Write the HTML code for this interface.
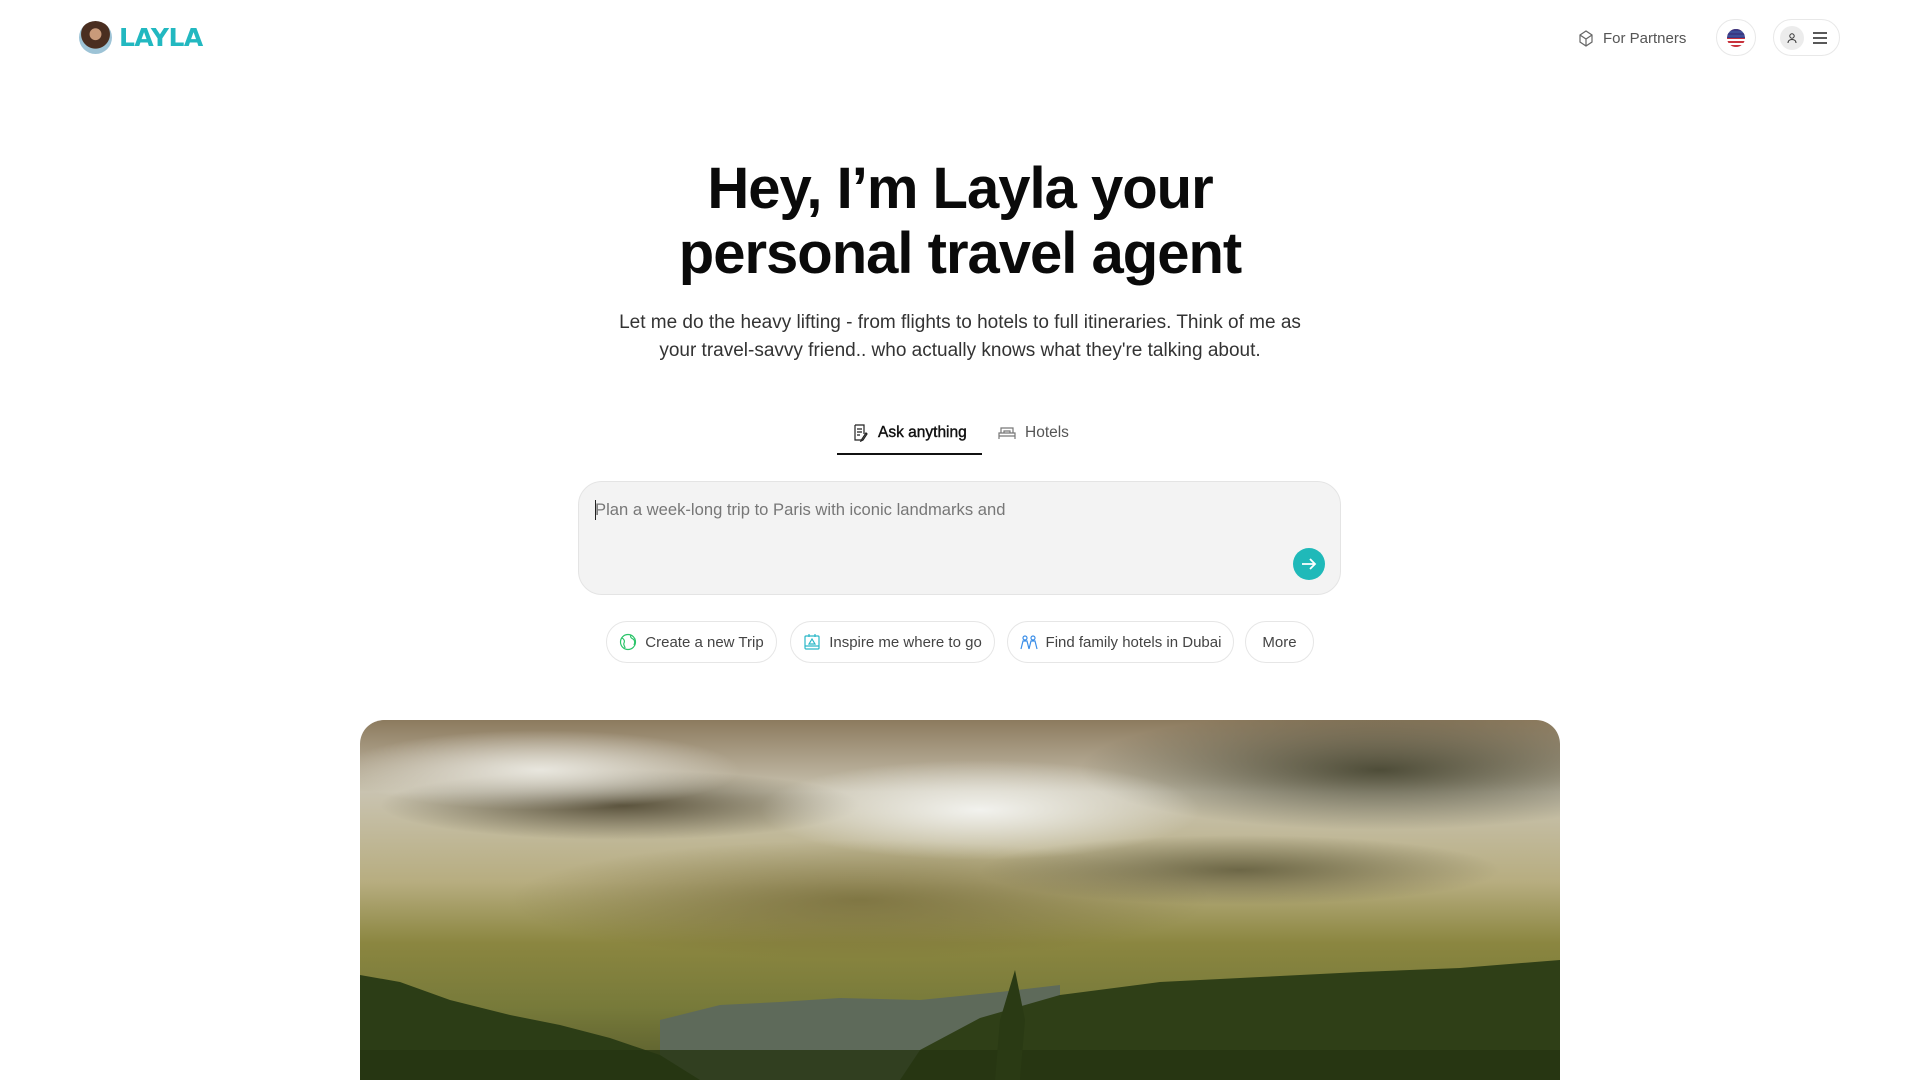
<!DOCTYPE html>
<html><head><meta charset="utf-8"><style>
*{box-sizing:border-box;margin:0;padding:0}
html,body{width:1920px;height:1080px;overflow:hidden}
body{background:#fff;font-family:"Liberation Sans",sans-serif;color:#111;position:relative}
.abs{position:absolute}
h1{position:absolute;left:0;width:1920px;top:156px;text-align:center;font-size:58px;line-height:65px;font-weight:700;letter-spacing:-1px;color:#0a0a0a}
.sub{position:absolute;left:0;width:1920px;top:309px;text-align:center;font-size:19px;line-height:28px;color:#333}
.tab{position:absolute;top:424px;font-size:15.5px;display:flex;align-items:center;gap:9px}
.box{position:absolute;left:578px;top:481px;width:763px;height:114px;background:#f3f3f3;border:1px solid #e4e4e4;border-radius:24px}
.chip{position:absolute;top:621px;height:42px;border:1px solid #e6e6e6;border-radius:21px;display:flex;align-items:center;justify-content:center;gap:8px;font-size:15px;color:#444}
</style></head><body>
<!-- header -->
<div class="abs" style="left:79px;top:21px;width:33px;height:33px;border-radius:50%;background:radial-gradient(circle at 50% 40%,#c99a7a 0 22%,#4a2e20 24% 55%,#9dc3d6 57%);"></div>
<div class="abs" style="left:119px;top:24px;font-size:25px;font-weight:900;color:#22b8c0;font-family:'DejaVu Sans',sans-serif;line-height:28px;letter-spacing:-0.5px">LAYLA</div>
<svg class="abs" style="left:1577px;top:29px" width="18" height="18" viewBox="0 0 18 18" fill="none" stroke="#666" stroke-width="1.2"><path d="M3 6 9 2l6 4v7l-6 4-6-4z M3 6l6 4 6-4 M9 10v7"/></svg>
<div class="abs" style="left:1603px;top:30px;font-size:15px;color:#555">For Partners</div>
<div class="abs" style="left:1716px;top:19px;width:40px;height:37px;border:1px solid #e8e8e8;border-radius:20px"></div>
<div class="abs" style="left:1727px;top:29px;width:18px;height:18px;border-radius:50%;background:repeating-linear-gradient(#c8323c 0 2px,#fff 2px 4px);overflow:hidden"><div style="width:18px;height:9px;background:#2a3a8c;opacity:.9"></div></div>
<div class="abs" style="left:1773px;top:19px;width:67px;height:37px;border:1px solid #e8e8e8;border-radius:20px"></div>
<div class="abs" style="left:1780px;top:26px;width:24px;height:24px;border-radius:50%;background:#ececec"></div>
<svg class="abs" style="left:1786px;top:32px" width="12" height="12" viewBox="0 0 12 12" fill="none" stroke="#333" stroke-width="1"><circle cx="6" cy="4" r="2.2"/><path d="M2 11c0-2.5 2-3.5 4-3.5s4 1 4 3.5"/></svg>
<svg class="abs" style="left:1812px;top:31px" width="16" height="14" viewBox="0 0 16 14" stroke="#222" stroke-width="1.4"><path d="M1 2h14M1 7h14M1 12h14"/></svg>

<h1>Hey, I’m Layla your<br>personal travel agent</h1>
<div class="sub">Let me do the heavy lifting - from flights to hotels to full itineraries. Think of me as<br>your travel-savvy friend.. who actually knows what they're talking about.</div>

<div class="tab" style="left:852px;color:#111"><svg width="17" height="18" viewBox="0 0 17 18" fill="none" stroke="#222" stroke-width="1.2"><path d="M3 1h9v9M3 1v15h7M5 5h5M5 8h5M5 11h3M14 9l-4 6-1 2 2-1 4-6z"/></svg><span style="-webkit-text-stroke:0.4px #111">Ask anything</span></div>
<div class="abs" style="left:837px;top:453px;width:145px;height:2px;background:#111"></div>
<div class="tab" style="left:998px;color:#555"><svg width="18" height="16" viewBox="0 0 18 16" fill="none" stroke="#777" stroke-width="1.2"><path d="M1 14V8h16v6M1 11h16M3 8V3h12v5M6 8V6h6v2"/></svg>Hotels</div>

<div class="box">
<div class="abs" style="left:16px;top:18px;width:1px;height:20px;background:#222"></div>
<div class="abs" style="left:16px;top:18px;font-size:16.6px;color:#777">Plan a week-long trip to Paris with iconic landmarks and</div>
<div class="abs" style="left:714px;top:66px;width:32px;height:32px;border-radius:50%;background:#1fb9b9"></div>
<svg class="abs" style="left:721px;top:73px" width="18" height="18" viewBox="0 0 18 18" fill="none" stroke="#fff" stroke-width="1.8"><path d="M2 9h13M10 4l5 5-5 5"/></svg>
</div>

<div class="chip" style="left:606px;width:171px"><svg width="18" height="18" viewBox="0 0 18 18" fill="none" stroke="#2bc46a" stroke-width="1.2"><circle cx="9" cy="9" r="7.5"/><path d="M3 5c2 1 3 3 2 5s1 3 1 5M12 2c-1 2 0 3 2 4s2 4 1 6"/></svg>Create a new Trip</div>
<div class="chip" style="left:790px;width:205px"><svg width="18" height="18" viewBox="0 0 18 18" fill="none" stroke="#2ab7c7" stroke-width="1.2"><rect x="2" y="3" width="14" height="13" rx="1"/><path d="M2 13h14M6 1v3M12 1v3M6 11l3-5 3 5z"/></svg>Inspire me where to go</div>
<div class="chip" style="left:1007px;width:227px"><svg width="18" height="16" viewBox="0 0 18 16" fill="none" stroke="#3b8ee8" stroke-width="1.2"><circle cx="5" cy="4" r="2"/><circle cx="13" cy="4" r="2"/><path d="M1 15l2-8h4l2 8M9 15l2-8h4l2 8"/></svg>Find family hotels in Dubai</div>
<div class="chip" style="left:1245px;width:69px">More</div>

<!-- hero image -->
<div class="abs" style="left:360px;top:720px;width:1200px;height:360px;border-radius:24px 24px 0 0;overflow:hidden;background:
radial-gradient(ellipse 220px 50px at 620px 90px,#f2f2ee,rgba(240,240,235,0) 100%),
radial-gradient(ellipse 200px 40px at 180px 50px,#e8e6de,rgba(230,228,220,0) 100%),
radial-gradient(ellipse 240px 35px at 260px 85px,rgba(70,62,40,.85),rgba(80,70,45,0) 100%),
radial-gradient(ellipse 300px 60px at 1020px 50px,rgba(60,60,40,.85),rgba(60,60,40,0) 100%),
radial-gradient(ellipse 260px 35px at 880px 150px,rgba(90,85,55,.8),rgba(90,85,55,0) 100%),
radial-gradient(ellipse 350px 60px at 500px 180px,rgba(110,100,50,.7),rgba(120,110,50,0) 100%),
linear-gradient(180deg,#8c7a5e 0%,#c9c3b0 20%,#b7ad80 45%,#8b8640 62%,#777a3a 80%,#55592b 100%);">
<svg class="abs" style="left:0;top:0" width="1200" height="360" viewBox="0 0 1200 360">
<path d="M300 300 L360 285 L420 282 L480 278 L560 280 L640 272 L700 265 L700 360 L300 360Z" fill="#5e6a5a"/>
<path d="M0 255 L40 262 L90 280 L150 295 L200 305 L250 318 L300 335 L340 360 L0 360Z" fill="#2c3d16"/>
<path d="M560 330 L620 298 L700 275 L800 262 L900 257 L1000 252 L1100 248 L1200 240 L1200 360 L540 360Z" fill="#2f3f17"/>
<path d="M0 330 L1200 330 L1200 360 L0 360Z" fill="#263512" opacity=".8"/>
<path d="M640 300 L655 250 L665 300 L660 360 L635 360Z" fill="#2a3a14"/>
</svg>
</div>
</body></html>
